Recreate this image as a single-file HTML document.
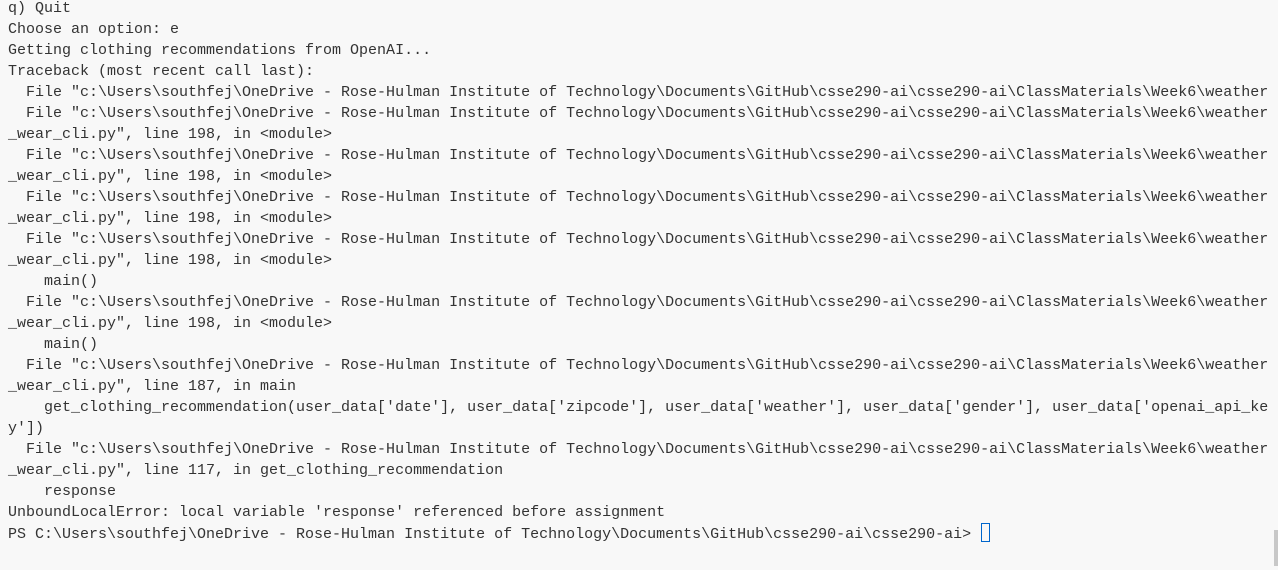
<!DOCTYPE html>
<html><head><style>
html,body{margin:0;padding:0;background:#f8f8f8;width:1278px;height:570px;overflow:hidden}
pre{position:absolute;left:8px;top:-2px;margin:0;font-family:"Liberation Mono",monospace;font-size:15px;line-height:21px;color:#333;white-space:pre}
.cur{display:inline-block;width:7px;height:17px;border:1px solid #0066cc;vertical-align:-4px;margin-left:1px}
.sb{position:absolute;left:1274px;top:530px;width:4px;height:36px;background:#c8c8c8}
</style></head><body>
<pre>q) Quit
Choose an option: e
Getting clothing recommendations from OpenAI...
Traceback (most recent call last):
  File "c:\Users\southfej\OneDrive - Rose-Hulman Institute of Technology\Documents\GitHub\csse290-ai\csse290-ai\ClassMaterials\Week6\weather
  File "c:\Users\southfej\OneDrive - Rose-Hulman Institute of Technology\Documents\GitHub\csse290-ai\csse290-ai\ClassMaterials\Week6\weather
_wear_cli.py", line 198, in &lt;module&gt;
  File "c:\Users\southfej\OneDrive - Rose-Hulman Institute of Technology\Documents\GitHub\csse290-ai\csse290-ai\ClassMaterials\Week6\weather
_wear_cli.py", line 198, in &lt;module&gt;
  File "c:\Users\southfej\OneDrive - Rose-Hulman Institute of Technology\Documents\GitHub\csse290-ai\csse290-ai\ClassMaterials\Week6\weather
_wear_cli.py", line 198, in &lt;module&gt;
  File "c:\Users\southfej\OneDrive - Rose-Hulman Institute of Technology\Documents\GitHub\csse290-ai\csse290-ai\ClassMaterials\Week6\weather
_wear_cli.py", line 198, in &lt;module&gt;
    main()
  File "c:\Users\southfej\OneDrive - Rose-Hulman Institute of Technology\Documents\GitHub\csse290-ai\csse290-ai\ClassMaterials\Week6\weather
_wear_cli.py", line 198, in &lt;module&gt;
    main()
  File "c:\Users\southfej\OneDrive - Rose-Hulman Institute of Technology\Documents\GitHub\csse290-ai\csse290-ai\ClassMaterials\Week6\weather
_wear_cli.py", line 187, in main
    get_clothing_recommendation(user_data['date'], user_data['zipcode'], user_data['weather'], user_data['gender'], user_data['openai_api_ke
y'])
  File "c:\Users\southfej\OneDrive - Rose-Hulman Institute of Technology\Documents\GitHub\csse290-ai\csse290-ai\ClassMaterials\Week6\weather
_wear_cli.py", line 117, in get_clothing_recommendation
    response
UnboundLocalError: local variable 'response' referenced before assignment
PS C:\Users\southfej\OneDrive - Rose-Hulman Institute of Technology\Documents\GitHub\csse290-ai\csse290-ai&gt; <span class="cur"></span></pre>
<div class="sb"></div>
</body></html>
